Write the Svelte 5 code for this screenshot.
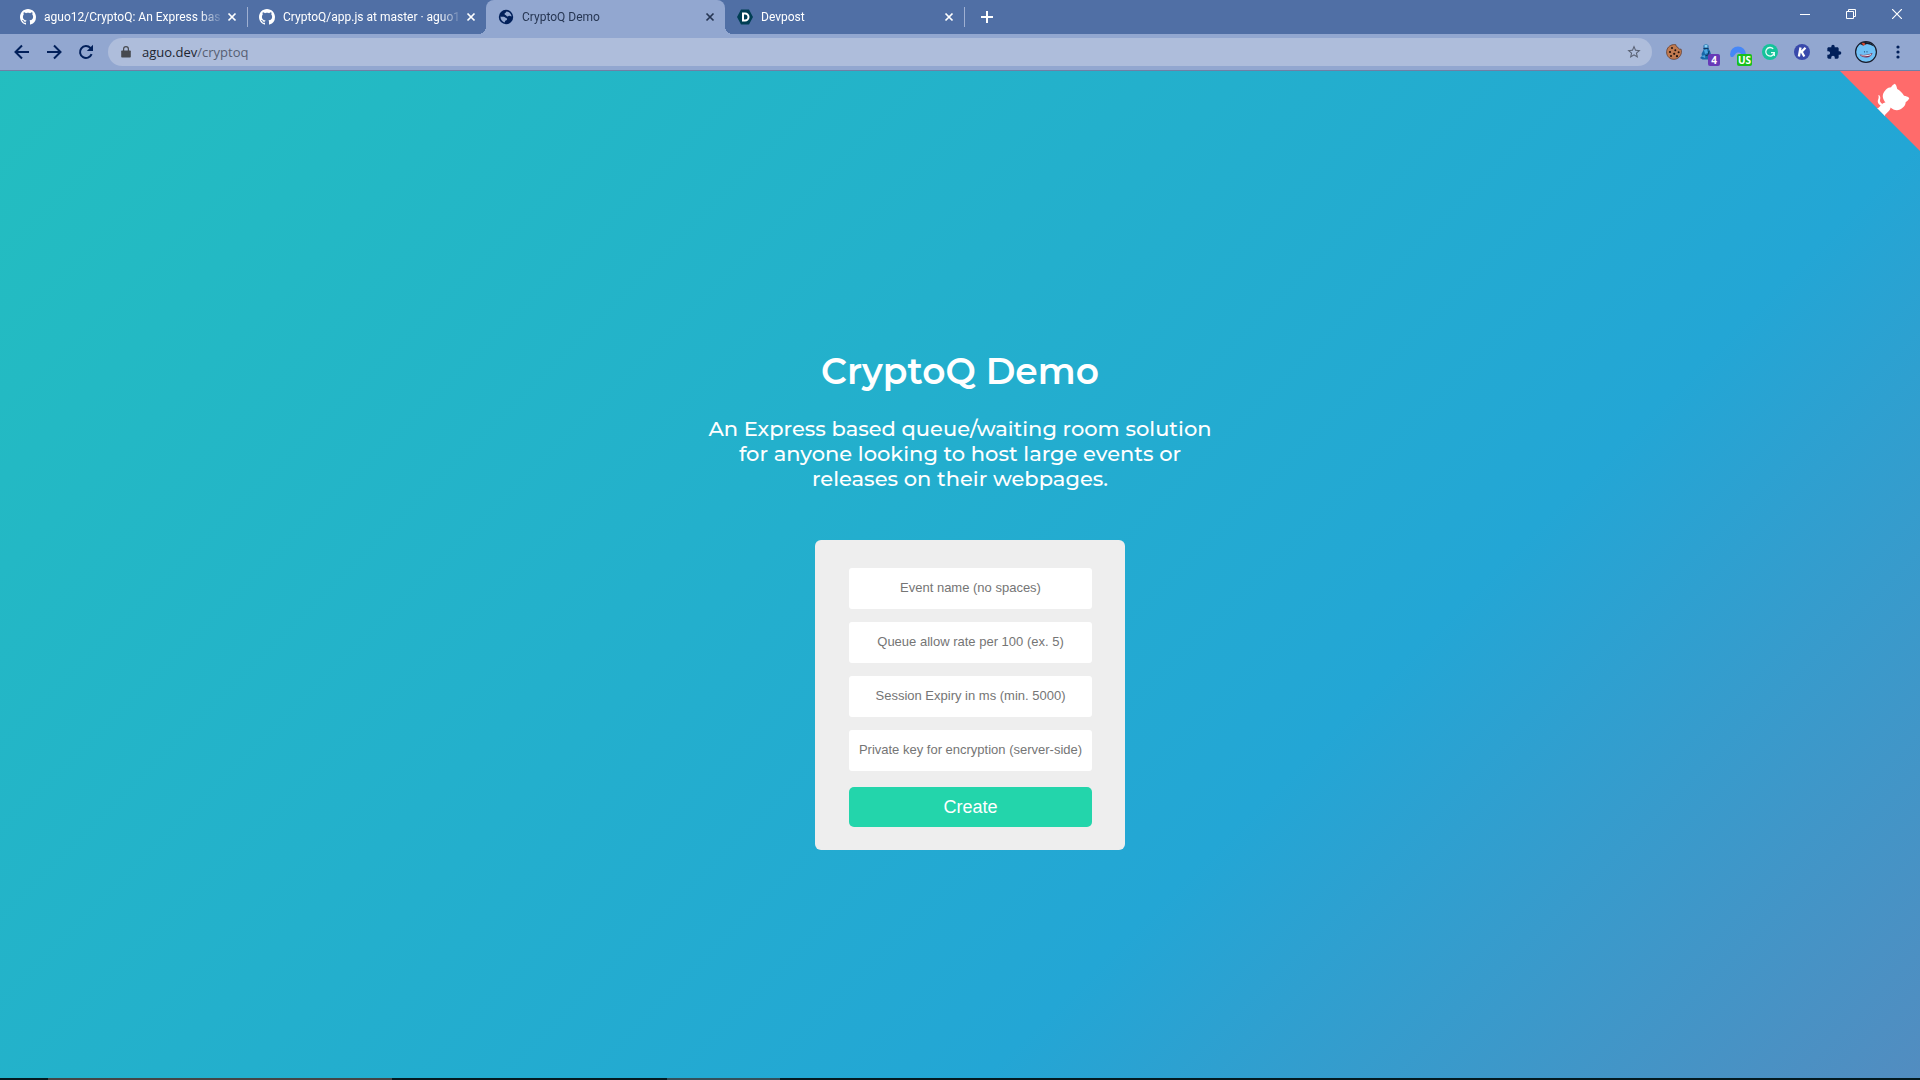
<script lang="ts">
	type Tab = { title: string; icon: 'github' | 'globe' | 'devpost'; active?: boolean; divider?: boolean }

	type Field = { id: string; placeholder: string }

	const tabs: Tab[] = [
		{ title: 'aguo12/CryptoQ: An Express bas', icon: 'github', divider: true },
		{ title: 'CryptoQ/app.js at master · aguo1', icon: 'github' },
		{ title: 'CryptoQ Demo', icon: 'globe', active: true },
		{ title: 'Devpost', icon: 'devpost', divider: true },
	]

	const fields: Field[] = [
		{ id: 'event', placeholder: 'Event name (no spaces)' },
		{ id: 'rate', placeholder: 'Queue allow rate per 100 (ex. 5)' },
		{ id: 'expiry', placeholder: 'Session Expiry in ms (min. 5000)' },
		{ id: 'key', placeholder: 'Private key for encryption (server-side)' },
	]

	const values: Record<string, string> = $state({ event: '', rate: '', expiry: '', key: '' })

	let url = $state('aguo.dev/cryptoq')

	const host = $derived(url.split('/')[0])
	const path = $derived(url.slice(host.length))

	const submit = (event: SubmitEvent) => {
		event.preventDefault()
	}
</script>

<div class="window">
	<header>
		<div class="strip">
			{#each tabs as tab}
				<div class="tab" class:active={tab.active} class:divider={tab.divider}>
					{#if tab.icon === 'github'}
						<svg class="favicon" viewBox="0 0 16 16" fill="#fff">
							<path d="M8 0C3.58 0 0 3.58 0 8c0 3.54 2.29 6.53 5.47 7.59.4.07.55-.17.55-.38 0-.19-.01-.82-.01-1.49-2.01.37-2.53-.49-2.69-.94-.09-.23-.48-.94-.82-1.13-.28-.15-.68-.52-.01-.53.63-.01 1.08.58 1.23.82.72 1.21 1.87.87 2.33.66.07-.52.28-.87.51-1.07-1.78-.2-3.64-.89-3.64-3.95 0-.87.31-1.59.82-2.15-.08-.2-.36-1.02.08-2.12 0 0 .67-.21 2.2.82.64-.18 1.32-.27 2-.27s1.36.09 2 .27c1.53-1.04 2.2-.82 2.2-.82.44 1.1.16 1.92.08 2.12.51.56.82 1.27.82 2.15 0 3.07-1.87 3.75-3.65 3.95.29.25.54.73.54 1.48 0 1.07-.01 1.93-.01 2.2 0 .21.15.46.55.38A8.01 8.01 0 0 0 16 8c0-4.42-3.58-8-8-8z" />
						</svg>
					{:else if tab.icon === 'globe'}
						<svg class="favicon" viewBox="0 0 16 16">
							<circle cx="8" cy="8" r="7.2" fill="#02205a" />
							<path d="M8.6 2.4c-.9.5-.5 1.3-1.5 1.7-.9.4-.8 1.700.3 1.800 1 .1 1 1.400 2 1.500 1.100.1 1.400-.8 2.300-.7.8.1 1.300.7 1.900.9-.2-2.600-2.200-4.900-5-5.200zM2.500 7.400c.8.5 2.200.2 3.300.3 1 .1 1.400 1.100 2.300 1.300 1 .3 1.400 1 .8 1.800-.6.7-1.600.7-1.900 1.400-.2.5-.1 1.100-.6 1.200-2.400-.7-4.100-3.200-3.900-6z" fill="#92a7d0" />
						</svg>
					{:else}
						<svg class="favicon" viewBox="0 0 16 16">
							<path d="M4 .5h8L16 8l-4 7.500H4L0 8z" fill="#003e54" />
							<path d="M6 4.500h2a3.500 3.500 0 0 1 0 7H6z" fill="none" stroke="#fff" stroke-width="2" />
						</svg>
					{/if}
					<span class="title">{tab.title}</span>
					<button class="close" aria-label="Close tab">
						<svg viewBox="0 0 10 10"><path d="M1.500 1.500l7 7m0-7l-7 7" stroke="currentColor" stroke-width="1.700" /></svg>
					</button>
				</div>
			{/each}
			<button class="new" aria-label="New tab">
				<svg viewBox="0 0 12 12"><path d="M6 0v12M0 6h12" stroke="#fff" stroke-width="2" /></svg>
			</button>
			<div class="controls">
				<button aria-label="Minimize">
					<svg viewBox="0 0 10 10"><path d="M0 5.500h10" stroke="#fff" /></svg>
				</button>
				<button aria-label="Restore">
					<svg viewBox="0 0 10 10" fill="none" stroke="#fff"><path d="M.5 2.500h7v7h-7zM2.500 2.500v-2h7v7h-2" /></svg>
				</button>
				<button aria-label="Close">
					<svg viewBox="0 0 10 10"><path d="M0 0l10 10M10 0L0 10" stroke="#fff" stroke-width="1.200" /></svg>
				</button>
			</div>
		</div>

		<div class="toolbar">
			<button class="nav" aria-label="Back">
				<svg viewBox="0 0 16 16"><path d="M15 8H2.500M8 1.500L1.500 8 8 14.500" /></svg>
			</button>
			<button class="nav" aria-label="Forward">
				<svg viewBox="0 0 16 16"><path d="M1 8h12.500M8 1.500L14.500 8 8 14.500" /></svg>
			</button>
			<button class="nav" aria-label="Reload">
				<svg viewBox="0 0 16 16"><path d="M13.600 10.200A6 6 0 1 1 12.400 3.900L14 5.500" /><path d="M15 .8V7H8.800z" fill="#02205a" stroke="none" /></svg>
			</button>
			<div class="omnibox">
				<svg class="lock" viewBox="0 0 10 12">
					<path d="M1 4.500h8q.8 0 .8.800v5.500q0 .8-.8.800H1q-.8 0-.8-.8V5.300q0-.8.8-.8z" fill="#474a50" />
					<path d="M2.600 5V3a2.400 2.400 0 0 1 4.800 0v2" fill="none" stroke="#474a50" stroke-width="1.200" />
				</svg>
				<a class="url" href="#top">{host}<span>{path}</span></a>
				<button aria-label="Bookmark this tab">
					<svg class="star" viewBox="0 0 24 24"><path d="M22 9.240l-7.190-.620L12 2 9.190 8.630 2 9.240l5.460 4.730L5.820 21 12 17.270 18.180 21l-1.630-7.030zM12 15.400l-3.760 2.270 1-4.280-3.320-2.880 4.380-.380L12 6.100l1.710 4.040 4.380.380-3.320 2.880 1 4.280z" /></svg>
				</button>
			</div>
			<button aria-label="Cookie editor">
				<svg viewBox="0 0 16 16">
					<path d="M7.500.6C9 .4 10 .8 10 .8c0 1.500.6 2.300 1.900 2.400.2 1.300 1 2.200 3.200 2 .6 2 .5 4.300-.7 6.300-1.600 2.800-4.400 4.200-7.500 3.800C3 14.800.4 11.500.6 7.700.8 4 3.600 1 7.500.6z" fill="#c07a50" stroke="#5c3626" stroke-width=".7" />
					<g fill="#21130e"><circle cx="6" cy="4" r="1" /><circle cx="9.300" cy="6.300" r="1" /><circle cx="4" cy="8" r="1.100" /><circle cx="12.600" cy="8.300" r="1" /><circle cx="8.200" cy="9.800" r="1.100" /><circle cx="5" cy="12" r="1" /><circle cx="11" cy="12.200" r="1.100" /></g>
				</svg>
			</button>
			<button class="ext" aria-label="Blocker, 4 blocked">
				<svg viewBox="0 0 16 16">
					<path d="M5.500 1.500Q8-1 10.500 1.500v3L12 7l1.500 5-2 3.500h-7L2 14l2-2-.5-2 2-4z" fill="#1767a8" />
					<path d="M6.500.8h3v2.700h-3z" fill="#8dd2f4" />
					<path d="M6 6l3-1 1 4-3 1zM3 12l5-1-1 3z" fill="#48a5df" />
					<path d="M5.500 4.500h5M11 7l-1 4-3 1" stroke="#123761" stroke-width="1" fill="none" />
				</svg>
				<span class="badge purple">4</span>
			</button>
			<button class="ext" aria-label="VPN, US">
				<svg viewBox="0 0 16 16">
					<path d="M0 10.500a8 8 0 1 1 16 0L15 13h-3c.3-4.500-4.500-6-6.500-3L3 13H.8z" fill="#4687f7" />
				</svg>
				<span class="badge green">US</span>
			</button>
			<button aria-label="Grammar">
				<svg viewBox="0 0 16 16">
					<circle cx="8" cy="8" r="8" fill="#15c39a" />
					<path d="M11.200 4.800A4.300 4.300 0 1 0 12.300 8.700H9M12.300 8.700V12" fill="none" stroke="#e6fff8" stroke-width="1.300" />
				</svg>
			</button>
			<button aria-label="K extension">
				<svg viewBox="0 0 16 16">
					<circle cx="8" cy="8" r="8" fill="#3949ab" />
					<path d="M6.500 3.500l-1.600 9M11.500 3.800L6.700 8.600M7.500 7.500l2.800 5" fill="none" stroke="#fff" stroke-width="2.300" />
				</svg>
			</button>
			<button aria-label="Extensions">
				<svg viewBox="0 0 24 24"><path d="M20.500 11H19V7c0-1.100-.9-2-2-2h-4V3.500a2.500 2.500 0 0 0-5 0V5H4c-1.100 0-2 .9-2 2v3.800h1.500a2.700 2.700 0 0 1 0 5.400H2V20c0 1.100.9 2 2 2h3.800v-1.500a2.700 2.700 0 0 1 5.400 0V22H17c1.100 0 2-.9 2-2v-4h1.500a2.500 2.500 0 0 0 0-5z" fill="#02205a" /></svg>
			</button>
			<button aria-label="Profile">
				<svg class="avatar" viewBox="0 0 22 22">
					<circle cx="11" cy="11" r="10.400" fill="#6fc0f5" stroke="#171a28" stroke-width="1.200" />
					<path d="M5 3Q10-1 17 3l2 2.500Q15 3 12 3L8 4.500z" fill="#171a28" />
					<path d="M6.500 1.800l3 .2.800 1.500L8.500 5z" fill="#d2492f" />
					<circle cx="9.500" cy="10.800" r=".6" fill="#173b66" /><circle cx="12" cy="10.800" r=".6" fill="#173b66" />
					<path d="M4.500 13.500q6 1.300 13-1.500-1.300 4.300-6.300 4.500-4.700 0-6.700-3z" fill="#7b2a4c" />
					<path d="M5.800 14.200q5.500.8 10.700-1.200l-.7 1.200q-4.800 1.600-9 .8z" fill="#eef5fa" />
				</svg>
			</button>
			<button aria-label="Menu">
				<svg viewBox="0 0 16 16"><g fill="#02205a"><circle cx="8" cy="3" r="1.600" /><circle cx="8" cy="8" r="1.600" /><circle cx="8" cy="13" r="1.600" /></g></svg>
			</button>
		</div>
	</header>

	<main id="top">
		<a class="corner" href="https://github.com/aguo12/CryptoQ" aria-label="View source on GitHub">
			<svg viewBox="0 0 250 250">
				<path d="M0 0l250 250V0z" fill="#ff6b6b" />
				<path fill="#fff" d="M128.300 109C113.800 99.700 119 89.600 119 89.600c3-6.900 1.500-11 1.500-11-1.300-6.600 2.900-2.300 2.900-2.300 3.900 4.600 2.100 11 2.100 11-2.600 10.300 5.100 14.600 8.900 15.900" />
				<path fill="#fff" d="M115 115c-.1.100 3.700 1.500 4.800.4l13.900-13.800c3.200-2.400 6.200-3.200 8.500-3-8.400-10.600-14.700-24.200 1.600-40.600 4.700-4.600 10.200-6.800 15.900-7 .6-1.600 3.500-7.400 11.700-10.900 0 0 4.700 2.400 7.400 16.100 4.300 2.400 8.400 5.600 12.100 9.200 3.600 3.600 6.800 7.800 9.200 12.200 13.700 2.600 16.200 7.300 16.200 7.300-3.600 8.200-9.400 11.100-10.900 11.700-.3 5.800-2.400 11.200-7.100 15.900-16.400 16.400-30 10-40.600 1.600.2 2.800-1 6.800-5 10.800L141 136.500c-1.200 1.200.6 5.400.8 5.300z" />
			</svg>
		</a>

		<h1>CryptoQ Demo</h1>
		<p>
			An Express based queue/waiting room solution<br />
			for anyone looking to host large events or<br />
			releases on their webpages.
		</p>
		<form onsubmit={submit}>
			{#each fields as field}
				<input
					id={field.id}
					aria-label={field.placeholder}
					placeholder={field.placeholder}
					bind:value={values[field.id]}
				/>
			{/each}
			<button type="submit">Create</button>
		</form>
	</main>

	<div class="taskbar">
		<span class="app-group"></span>
		<span class="app-single"></span>
	</div>
</div>

<style>
	.window {
		display: flex;
		flex-direction: column;
		min-height: 100vh;
		font-family: 'Segoe UI', 'Open Sans', sans-serif;
	}

	button {
		display: grid;
		place-items: center;
		padding: 0;
		border: none;
		background: none;
	}

	svg {
		display: block;
	}

	/* Tab strip */
	.strip {
		display: flex;
		height: 34px;
		padding-left: 8px;
		background: #506fa5;
		font-family: 'Segoe UI', Roboto, sans-serif;
	}

	.tab {
		position: relative;
		display: flex;
		flex: 0 1 239px;
		align-items: center;
		min-width: 0;
		box-sizing: border-box;
		padding: 0 7px 0 12px;
		color: #fff;
		font-size: 12px;
	}

	.divider::after {
		position: absolute;
		top: 7px;
		right: -1px;
		width: 1px;
		height: 20px;
		background: #9fb0d2;
		content: '';
	}

	.active {
		border-radius: 8px 8px 0 0;
		background: #92a7d0;
		color: #263653;
	}

	.active::before,
	.active::after {
		position: absolute;
		bottom: 0;
		width: 8px;
		height: 8px;
		content: '';
	}

	.active::before {
		right: 100%;
		background: radial-gradient(circle at 0 0, transparent 8px, #92a7d0 8px);
	}

	.active::after {
		left: 100%;
		background: radial-gradient(circle at 100% 0, transparent 8px, #92a7d0 8px);
	}

	.favicon {
		flex: none;
		width: 16px;
		height: 16px;
		margin-right: 8px;
	}

	.title {
		flex: 1;
		overflow: hidden;
		white-space: nowrap;
		mask-image: linear-gradient(to left, transparent, #000 24px);
	}

	.close {
		width: 16px;
		height: 16px;
		color: inherit;
	}

	.close svg,
	.controls svg {
		width: 10px;
		height: 10px;
	}

	.new {
		width: 28px;
		margin-left: 9px;
	}

	.new svg {
		width: 12px;
		height: 12px;
	}

	.controls {
		display: flex;
		height: 28px;
		margin-left: auto;
	}

	.controls button {
		width: 46px;
	}

	/* Toolbar */
	.toolbar {
		display: flex;
		align-items: center;
		height: 36px;
		padding: 0 6px;
		border-bottom: 1px solid #6f7fa5;
		background: #92a7d0;
	}

	.toolbar button {
		flex: none;
		width: 32px;
		height: 28px;
	}

	.toolbar svg {
		width: 16px;
		height: 16px;
	}

	.nav svg {
		fill: none;
		stroke: #02205a;
		stroke-width: 2;
	}

	.omnibox {
		display: flex;
		flex: 1;
		align-items: center;
		height: 28px;
		margin: 0 6px;
		padding-left: 13px;
		border-radius: 14px;
		background: #aebddb;
	}

	.toolbar .lock {
		width: 10px;
		height: 12px;
		margin-right: 11px;
	}

	.url {
		flex: 1;
		color: #202530;
		font-size: 13px;
		text-decoration: none;
	}

	.url span {
		color: #565f73;
	}

	.toolbar .omnibox button {
		width: 36px;
	}

	.toolbar .star {
		fill: #5a6274;
	}

	.ext {
		position: relative;
	}

	.badge {
		position: absolute;
		right: 2px;
		bottom: 0;
		box-sizing: border-box;
		min-width: 12px;
		padding: 0 1px;
		border-radius: 2px;
		color: #fff;
		font: 700 10px/12px 'Segoe UI', 'Open Sans', sans-serif;
		text-align: center;
	}

	.purple {
		background: #673ab7;
	}

	.green {
		background: #17c01c;
	}

	.toolbar .avatar {
		width: 22px;
		height: 22px;
	}

	/* Page */
	main {
		position: relative;
		display: flex;
		flex: 1;
		flex-direction: column;
		align-items: center;
		padding-top: 276px;
		background: linear-gradient(-45deg, #ee7752, #e73c7e, #23a6d5, #23d5ab) 7% 50% / 400% 400%;
		color: #fff;
		font-family: Montserrat, Inter, sans-serif;
		text-align: center;
	}

	.corner {
		position: absolute;
		top: 0;
		right: 0;
		width: 80px;
		height: 80px;
	}

	h1 {
		margin: 0;
		font-size: 36px;
		font-weight: 600;
		line-height: 48px;
	}

	p {
		margin: 21px 0 0;
		font-size: 21px;
		font-weight: 500;
		line-height: 25px;
	}

	form {
		display: flex;
		flex-direction: column;
		box-sizing: border-box;
		width: 310px;
		margin: 49px 0 0 20px;
		padding: 28px 33px 23px 34px;
		border-radius: 6px;
		background: #eee;
	}

	input {
		box-sizing: border-box;
		width: 100%;
		height: 41px;
		margin-bottom: 13px;
		padding: 0 0 2px;
		border: none;
		border-radius: 3px;
		background: #fff;
		font: 13px Arial, 'Liberation Sans', sans-serif;
		text-align: center;
	}

	input::placeholder {
		color: #757575;
	}

	form button {
		height: 40px;
		margin-top: 3px;
		border-radius: 5px;
		background: #23d5ab;
		color: #fff;
		font: 18px Arial, 'Liberation Sans', sans-serif;
	}

	/* Top edge of the auto-hidden taskbar */
	.taskbar {
		display: flex;
		height: 2px;
		background: #041a20;
	}

	.app-group {
		width: 344px;
		margin-left: 48px;
		background: #454545;
	}

	.app-single {
		width: 113px;
		margin-left: 275px;
		background: #34505a;
	}
</style>
